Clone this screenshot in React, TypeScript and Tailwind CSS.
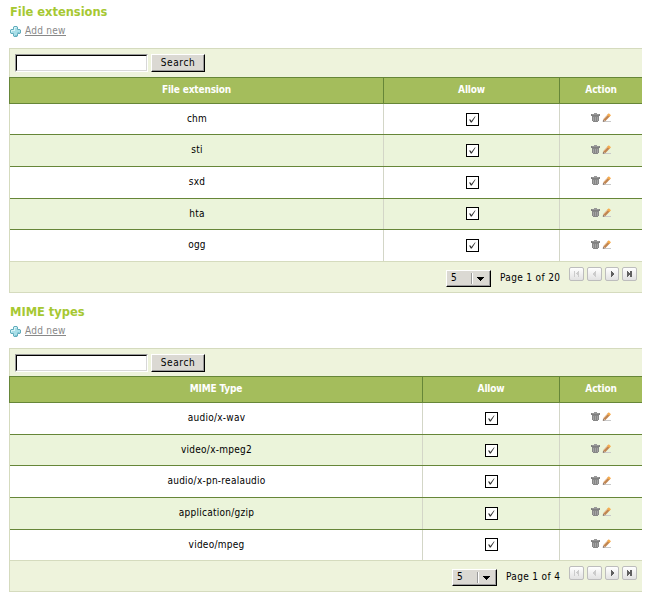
import React from "react";

type Row = { name: string; h: string; box: string; icons: string };
type SectionProps = {
  title: string;
  column: string;
  cols: string;
  rows: Row[];
  page: string;
  pageWidth: string;
  barHeight: string;
  boxShift: string;
};

const AddIcon = () => (
  <svg width="11" height="11" viewBox="0 0 11 11" className="block">
    <path d="M4 .5h3l.5.5v2.5H10l.5.5v3l-.5.5H7.5V10l-.5.5H4l-.5-.5V7.500H1L.5 7V4L1 3.500h2.500V1z" fill="#a9dfe8" stroke="#62adbd" />
    <path d="M4.500 5V1.500h2M1.500 6V4.500h3" fill="none" stroke="#d9f5f8" />
    <path d="M7 9.500H5M9.500 6.500h-2" fill="none" stroke="#7cc4d2" />
  </svg>
);

const TrashIcon = () => (
  <svg width="9" height="10" viewBox="0 0 9 10" className="block" shapeRendering="crispEdges">
    <path d="M3 0h3v1H3z" fill="#999" />
    <path d="M0 1h9v2H0z" fill="#808080" />
    <path d="M1 1h7v1H1z" fill="#979797" />
    <path d="M1 3h7v5H7v1H2V8H1z" fill="#868686" />
    <path d="M2 4h1v4H2zM4 4h1v4H4zM6 4h1v4H6z" fill="#a3a3a3" />
  </svg>
);

const PencilIcon = () => (
  <svg width="9" height="10" viewBox="0 0 9 10" className="block">
    <path d="M2 8.500h7" stroke="#c9c9c9" />
    <path d="M2.200 7.200L7 2.200" stroke="#c08552" strokeWidth="2.800" />
    <path d="M1.900 6.200L6 1.900" stroke="#e2b07c" strokeWidth="1" />
    <path d="M6.300 2.900L7.900 1.200" stroke="#f8ac4c" strokeWidth="3" />
    <path d="M1 6.700l1.800 1.500L.8 9z" fill="#7d6555" />
  </svg>
);

const Check = () => (
  <span className="block h-[13px] w-[13px] border border-black bg-white">
    <svg width="11" height="11" viewBox="0 0 11 11" className="block">
      <path d="M2 5.500h1.500L4.400 7l3.500-4.500h.7L4.800 8.400H3.800z" fill="#303030" />
    </svg>
  </span>
);

const glyphs = [
  "M4 3h1v6H4zM8 3h1v6H8V7H7V6H6V5h1V4h1z",
  "M8 3v6H7V8H6V7H5V5h1V4h1V3z",
  "M5 3h1v1h1v1h1v2H7v1H6v1H5z",
  "M4 3h1v1h1v1h1v2H6v1H5v1H4zM7 3h2v6H7z",
];

const PageButton = ({ index }: { index: number }) => (
  <button
    className={
      "block h-[14px] overflow-hidden rounded-[2px] border border-[#bdbdbd] bg-gradient-to-b from-white to-[#e2e2e2] " +
      (index === 2 ? "w-[14px]" : "w-[15px]")
    }
  >
    <svg width="13" height="12" viewBox="0 0 13 12" className="block" shapeRendering="crispEdges">
      <path d={glyphs[index]} fill={index < 2 ? "#cccccc" : "#606060"} />
    </svg>
  </button>
);

function Section({ title, column, cols, rows, page, pageWidth, barHeight, boxShift }: SectionProps) {
  return (
    <section className="w-[633px]">
      <h2 className="h-[19px] pl-px font-['DejaVu_Sans',sans-serif] text-[11.500px] leading-[15px] font-bold tracking-[-0.040px] text-[#a6c832]">{title}</h2>
      <div className="flex h-[24px] items-start pl-px">
        <div className="pt-[2px]"><AddIcon /></div>
        <a className="ml-1 h-[12px] border-b border-[#888] pt-px text-[10px] leading-[11px] tracking-[0.250px] text-[#888]">Add new</a>
      </div>
      <div className="border-l border-[#d5dbbe]">
        <div className={"flex items-start border-t border-[#d5dbbe] bg-[#eef3dc] pt-[5px] pl-[5px] " + barHeight}>
          <div className="h-[18px] w-[133px] border border-t-[#999] border-r-white border-b-white border-l-[#999]">
            <input aria-label={title} className="block h-[16px] w-[131px] border border-t-black border-r-[#d8d8d8] border-b-[#d8d8d8] border-l-black bg-white px-1 text-[10px] outline-none" />
          </div>
          <button className="ml-[3px] h-[18px] w-[54px] border border-t-white border-r-black border-b-black border-l-white bg-[#dbd9d3] text-[10px] leading-[14px] tracking-[0.600px] shadow-[inset_-1px_-1px_0_#999]">Search</button>
        </div>
        <div className={"-ml-px grid h-[27px] border-y border-l border-[#668638] bg-[#a4bd5c] text-center text-[10px] leading-[24px] font-bold tracking-[-0.150px] text-white " + cols}>
          <div className="border-r border-[#668638]">{column}</div>
          <div className="border-r border-[#668638]">Allow</div>
          <div>Action</div>
        </div>
        {rows.map((r, i) => (
          <div
            key={r.name}
            className={
              "grid border-b text-[10px] " + cols + " " + r.h +
              (i % 2 ? " bg-[#ebf4da]" : " bg-white") +
              (i === rows.length - 1 ? " border-[#d5dbbe]" : " border-[#668638]")
            }
          >
            <div className="border-r border-[#d3d6c7] pt-[8px] pl-px text-center leading-[13px] tracking-[0.250px]">{r.name}</div>
            <div className={"flex justify-center border-r border-[#d3d6c7] " + boxShift + " " + r.box}><Check /></div>
            <div className={"flex justify-center gap-[2px] " + r.icons}><TrashIcon /><PencilIcon /></div>
          </div>
        ))}
        <div className="flex h-[31px] justify-end border-b border-[#d5dbbe] bg-[#eef3dc] pr-[5px] text-[10px]">
          <div className="mt-[8px] flex h-[17px] w-[45px] border border-t-white border-r-black border-b-black border-l-white bg-[#dbd9d3] shadow-[inset_-1px_-1px_0_#999]">
            <span className="w-[24px] pl-[4px] leading-[14px]">5</span>
            <span className="mt-[2px] h-[11px] border-l border-[#999] bg-white pr-px" />
            <svg width="15" height="15" className="block" viewBox="0 0 15 15" shapeRendering="crispEdges">
              <path d="M4 6h7v1h-1v1H9v1H8v1H7V9H6V8H5V7H4z" fill="#000" />
            </svg>
          </div>
          <span className={"mt-[9px] ml-[9px] leading-[14px] tracking-[0.350px] whitespace-nowrap " + pageWidth}>{page}</span>
          <div className="mt-[5px] flex gap-[3px]">
            {[0, 1, 2, 3].map((n) => <PageButton key={n} index={n} />)}
          </div>
        </div>
      </div>
    </section>
  );
}

export default function App() {
  return (
    <main className="h-[603px] w-[654px] bg-white pt-[5px] pl-[9px] font-['DejaVu_Sans_Condensed','DejaVu_Sans',sans-serif] text-black">
      <Section
        title="File extensions"
        column="File extension"
        cols="grid-cols-[374px_176px_1fr]"
        barHeight="h-[29px]"
        boxShift="pl-[2px]"
        page="Page 1 of 20"
        pageWidth="w-[69px]"
        rows={[
          { name: "chm", h: "h-[31px]", box: "pt-[9px]", icons: "pt-[9px]" },
          { name: "sti", h: "h-[32px]", box: "pt-[9px]", icons: "pt-[10px]" },
          { name: "sxd", h: "h-[32px]", box: "pt-[9px]", icons: "pt-[9px]" },
          { name: "hta", h: "h-[31px]", box: "pt-[8px]", icons: "pt-[9px]" },
          { name: "ogg", h: "h-[32px]", box: "pt-[9px]", icons: "pt-[10px]" },
        ]}
      />
      <div className="h-[12px]" />
      <Section
        title="MIME types"
        column="MIME Type"
        cols="grid-cols-[413px_137px_1fr]"
        barHeight="h-[28px]"
        boxShift="pl-px"
        page="Page 1 of 4"
        pageWidth="w-[63px]"
        rows={[
          { name: "audio/x-wav", h: "h-[32px]", box: "pt-[9px]", icons: "pt-[9px]" },
          { name: "video/x-mpeg2", h: "h-[31px]", box: "pt-[9px]", icons: "pt-[9px]" },
          { name: "audio/x-pn-realaudio", h: "h-[32px]", box: "pt-[9px]", icons: "pt-[10px]" },
          { name: "application/gzip", h: "h-[32px]", box: "pt-[9px]", icons: "pt-[9px]" },
          { name: "video/mpeg", h: "h-[31px]", box: "pt-[8px]", icons: "pt-[9px]" },
        ]}
      />
    </main>
  );
}
